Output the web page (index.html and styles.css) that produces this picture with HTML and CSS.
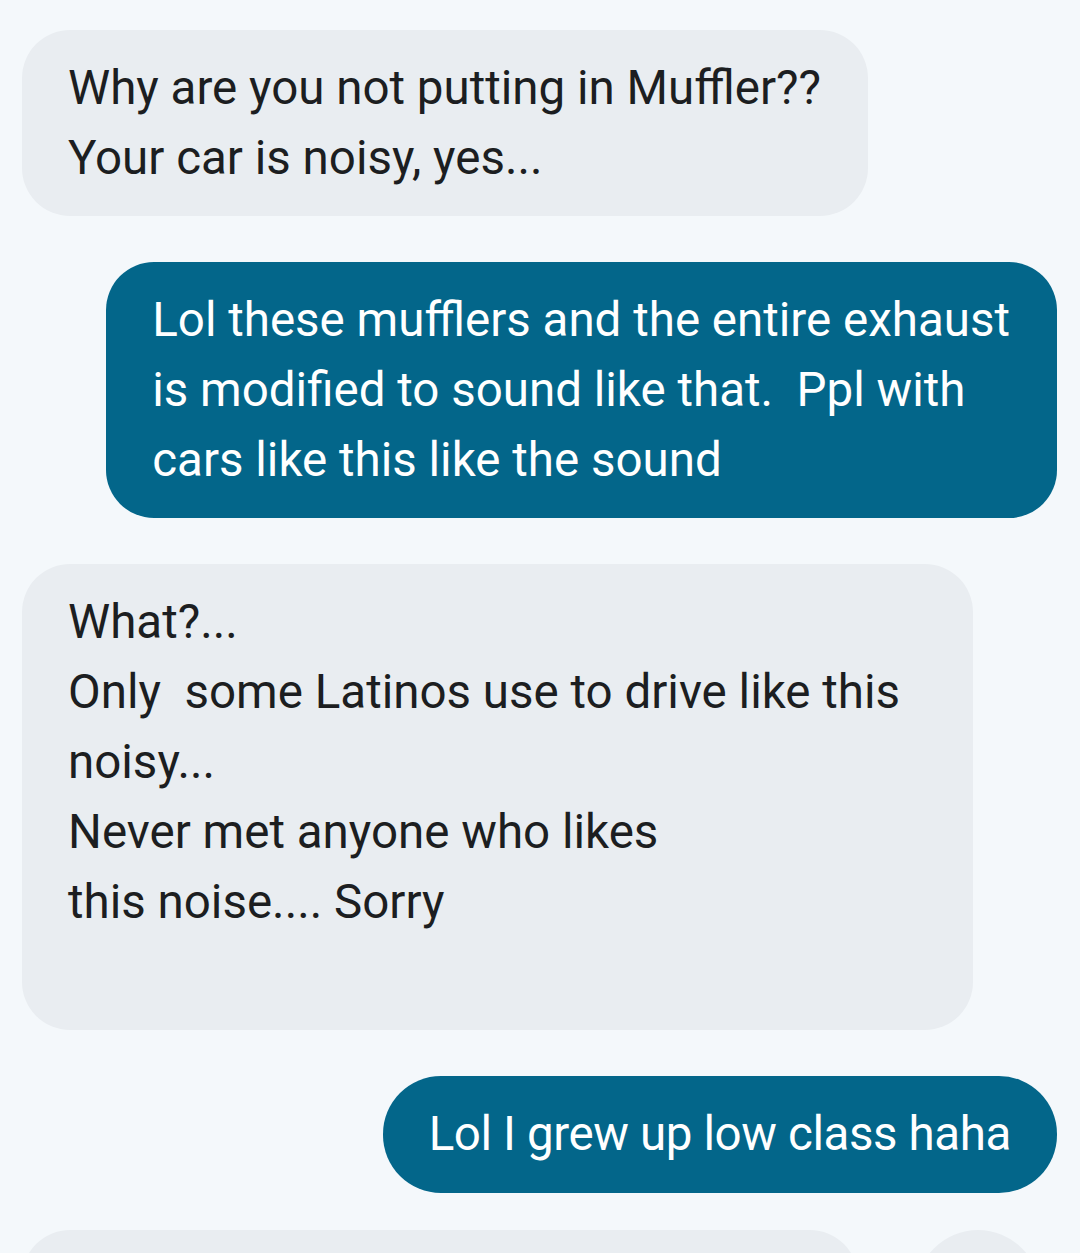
FILE: index.html
```html
<!DOCTYPE html>
<html lang="en">
<head>
    <meta charset="UTF-8">
    <meta name="viewport" content="width=device-width, initial-scale=1.0">
    <title>Messages</title>
    <link rel="stylesheet" href="styles.css">
</head>
<body>
    <div class="thread">
        <div class="msg in"><p class="text">Why are you not putting in Muffler??<br>Your car is noisy, yes...</p></div>

        <div class="msg out"><p class="text">Lol these mufflers and the entire exhaust<br>is modified to sound like that.  Ppl with<br>cars like this like the sound</p></div>

        <div class="msg in wide"><p class="text">What?...<br>Only  some Latinos use to drive like this<br>noisy...<br>Never met anyone who likes<br>this noise.... Sorry<br><br></p></div>

        <div class="msg out pill"><p class="text">Lol I grew up low class haha</p></div>

        <div class="row-next">
            <div class="msg in stub"></div>
            <div class="stub-round"></div>
        </div>
    </div>
</body>
</html>
```

FILE: styles.css
```css
html, body {
    margin: 0;
    height: 1253px;
    overflow: hidden;
}

body {
    background-color: #f4f8fb;
    font-family: Roboto, "Noto Sans", sans-serif;
}

.thread {
    display: flex;
    flex-direction: column;
    gap: 46px;
    padding: 30px 23px 0 22px;
}

.msg {
    max-width: 970px;
    box-sizing: border-box;
    padding: 23px 47px 23px 46px;
    border-radius: 48px;
}

.msg.wide {
    width: 951px;
}

.text {
    margin: 0;
    font-size: 47.5px;
    line-height: 70px;
    white-space: pre;
}

.msg.in {
    align-self: flex-start;
    background-color: #e9edf1;
    color: #1c1e21;
}

.msg.out {
    align-self: flex-end;
    background-color: #03668a;
    color: #ffffff;
}

.msg.pill {
    border-radius: 58px;
    padding: 23px 46px 24px 46px;
}

.msg.pill .text {
    letter-spacing: -0.4px;
}

.row-next {
    display: flex;
    gap: 58px;
    margin-top: -9px;
}

.msg.stub {
    width: 836px;
    height: 140px;
}

.stub-round {
    width: 124px;
    height: 140px;
    border-radius: 62px;
    background-color: #e9edf1;
}
```
